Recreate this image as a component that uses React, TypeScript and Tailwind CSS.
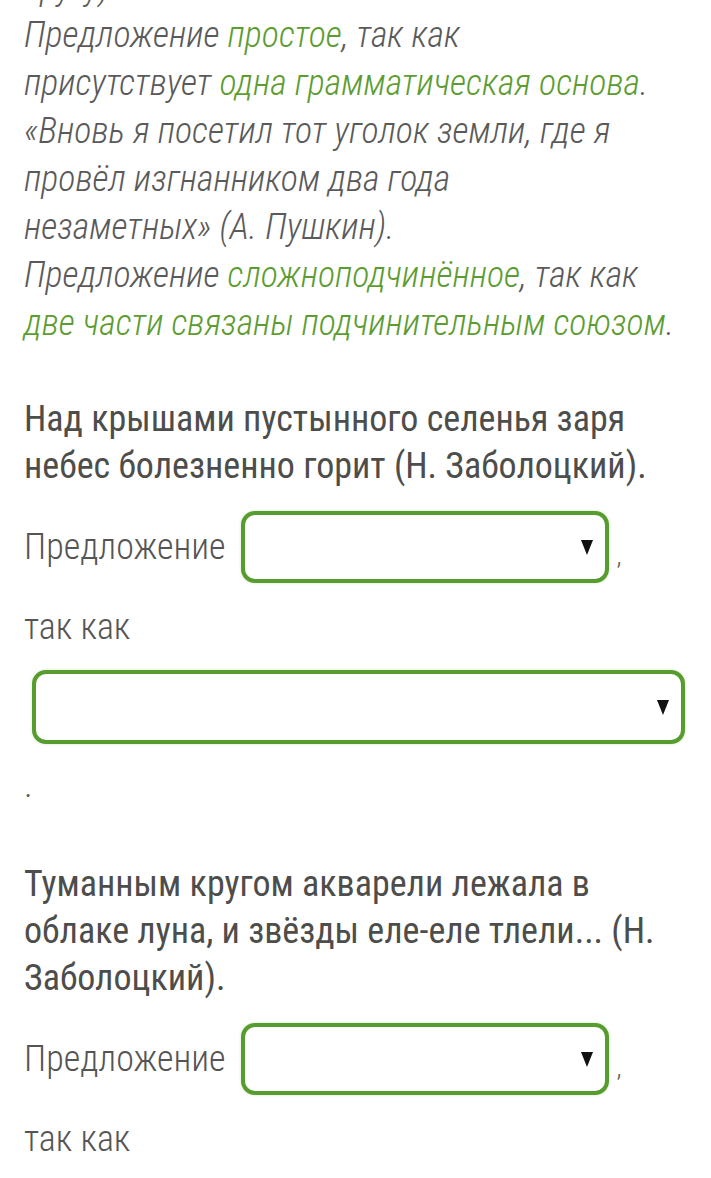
import React from 'react';

const cond = '[font-stretch:75%]';

function Select({ wide }: { wide?: boolean }) {
  return (
    <div
      className={
        'flex items-center justify-end rounded-[14px] border-4 border-[#579c2e] bg-white pr-[12px] shadow-[0_0_3px_rgba(120,190,80,0.35)] ' +
        (wide ? 'ml-2 h-[74px] w-[653px]' : 'h-[72px] w-[368px]')
      }
    >
      <svg width="12" height="15" viewBox="0 0 12 15">
        <polygon points="0,0 12,0 6,15" fill="#111" />
      </svg>
    </div>
  );
}

function Answer() {
  return (
    <>
      <div className="mt-[21px] flex items-center">
        <span className={`text-[36px] font-light leading-[47px] text-[#555] ${cond}`}>Предложение</span>
        <div className="ml-[15px]">
          <Select />
        </div>
        <span className={`ml-2 mt-4 text-[26px] font-light text-[#555] ${cond}`}>,</span>
      </div>
      <p className={`mt-[21px] text-[36px] font-light leading-[47px] text-[#555] ${cond}`}>так как</p>
    </>
  );
}

export default function App() {
  return (
    <div className="min-h-screen overflow-hidden bg-white px-6" style={{ fontFamily: 'Roboto, "Noto Sans", sans-serif' }}>
      <div className={`-mt-[37px] whitespace-nowrap text-[36px] font-light italic leading-[48px] text-[#5a5a5a] ${cond}`}>
        <p>кругу).</p>
        <p>
          Предложение <span className="text-[#5c9c30]">простое</span>, так как
          <br />
          присутствует <span className="text-[#5c9c30]">одна грамматическая основа</span>.
        </p>
        <p>
          «Вновь я посетил тот уголок земли, где я
          <br />
          провёл изгнанником два года
          <br />
          незаметных» (А. Пушкин).
        </p>
        <p>
          Предложение <span className="text-[#5c9c30]">сложноподчинённое</span>, так как
          <br />
          <span className="text-[#5c9c30]">две части связаны подчинительным союзом</span>.
        </p>
      </div>

      <p className={`mt-[49px] text-[36px] leading-[47px] text-[#4d4d4b] ${cond}`}>
        Над крышами пустынного селенья заря небес болезненно горит (Н. Заболоцкий).
      </p>
      <Answer />
      <div className="mt-[19px]">
        <Select wide />
      </div>
      <p className={`mt-[18px] text-[36px] font-light leading-[47px] text-[#555] ${cond}`}>.</p>

      <p className={`mt-[52px] text-[36px] leading-[47px] text-[#4d4d4b] ${cond}`}>
        Туманным кругом акварели лежала в облаке луна, и звёзды еле-еле тлели... (Н. Заболоцкий).
      </p>
      <Answer />
    </div>
  );
}
